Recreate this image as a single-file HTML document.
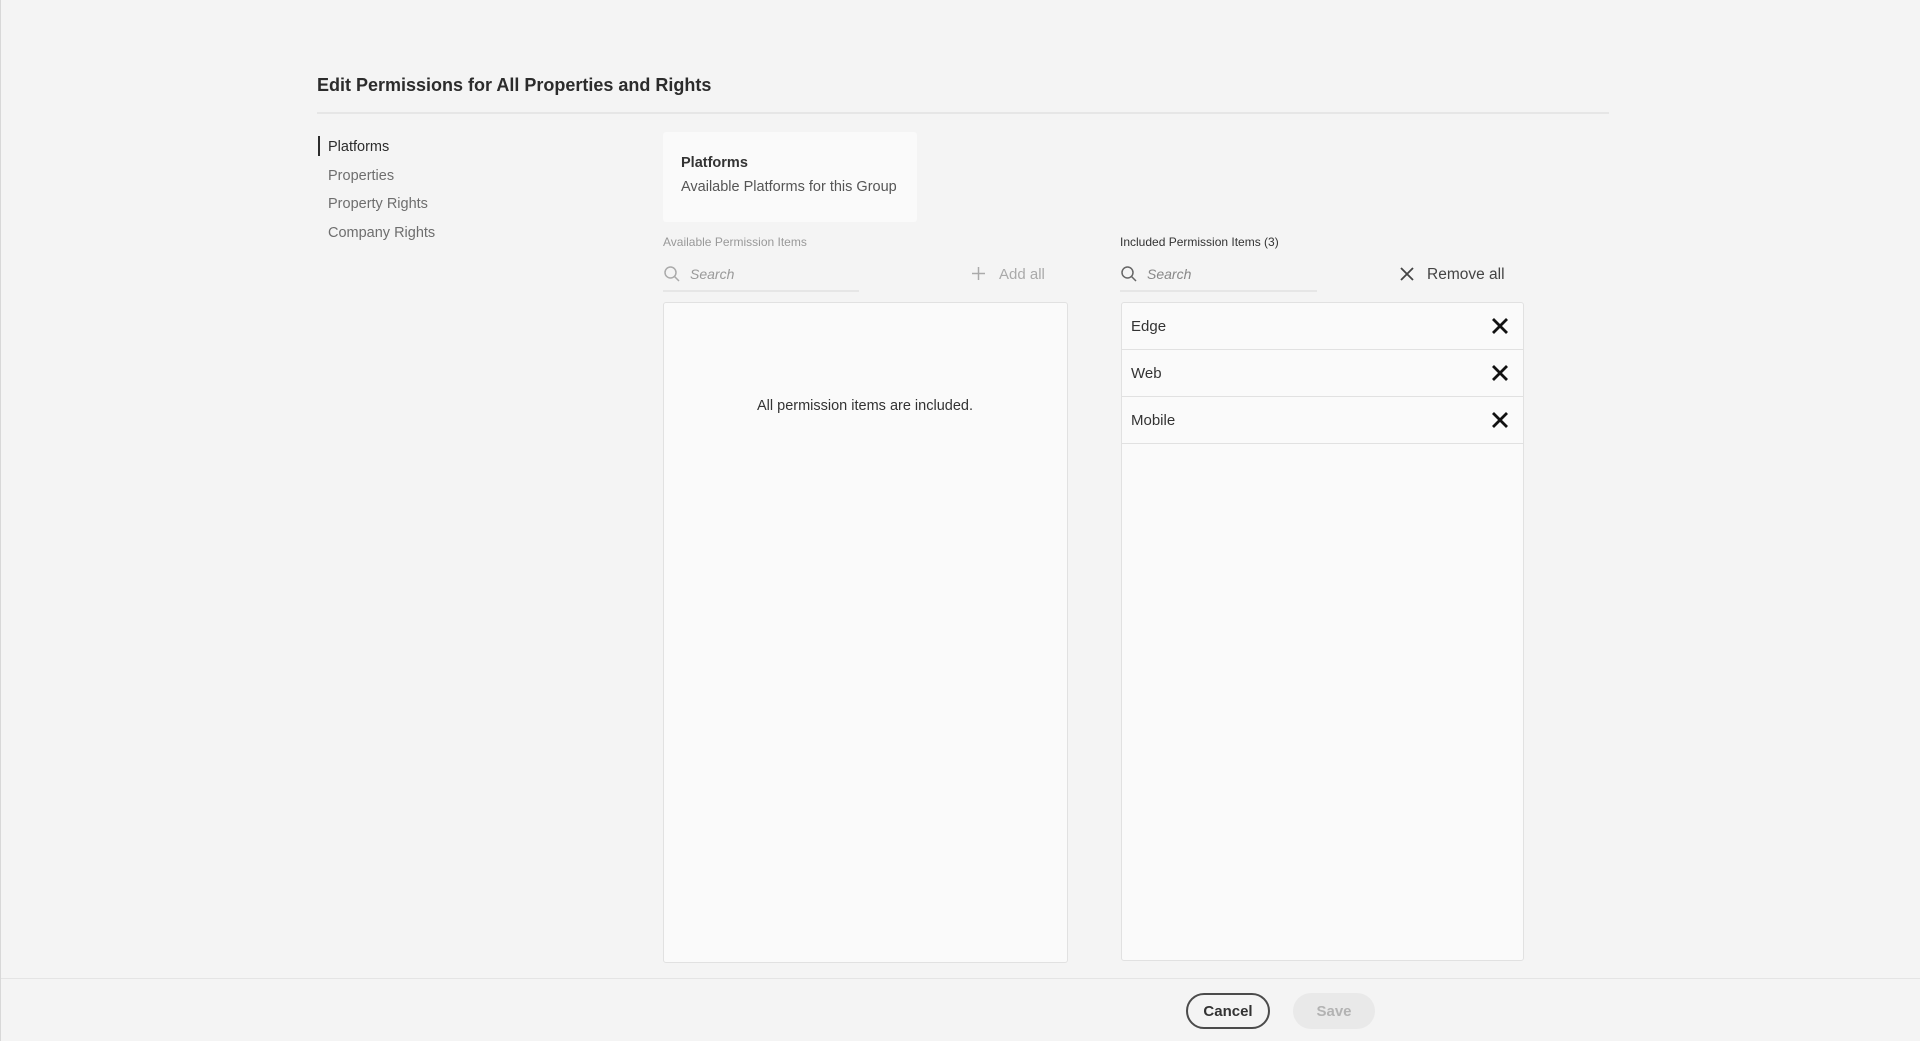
<!DOCTYPE html>
<html><head><meta charset="utf-8"><style>
*{box-sizing:border-box;margin:0;padding:0}
body{width:1920px;height:1041px;background:#f4f4f4;font-family:"Liberation Sans",sans-serif;color:#2c2c2c;position:relative;overflow:hidden;border-left:1px solid #d8d8d8}
.a{position:absolute;white-space:nowrap}
.box{position:absolute;background:#fafafa;border:1px solid #e1e1e1;border-radius:3px}
.row{position:absolute;left:0;right:0;height:47px;border-bottom:1px solid #e1e1e1;font-size:15px;padding-left:9px;line-height:48px;color:#333}
.row svg{position:absolute;right:14px;top:14px}
</style></head><body>
<div class="a" style="left:316px;top:75px;font-size:18px;font-weight:bold;color:#2c2c2c">Edit Permissions for All Properties and Rights</div>
<div class="a" style="left:316px;top:112px;width:1292px;height:2px;background:#e6e6e6"></div>
<div class="a" style="left:317px;top:136px;width:2px;height:20px;background:#2c2c2c"></div>
<div class="a" style="left:327px;top:139px;font-size:14.5px;color:#2c2c2c">Platforms</div>
<div class="a" style="left:327px;top:168px;font-size:14.5px;color:#6e6e6e">Properties</div>
<div class="a" style="left:327px;top:196px;font-size:14.5px;color:#6e6e6e">Property Rights</div>
<div class="a" style="left:327px;top:225px;font-size:14.5px;color:#6e6e6e">Company Rights</div>
<div class="a" style="left:662px;top:132px;width:254px;height:90px;background:#fafafa;border-radius:3px"></div>
<div class="a" style="left:680px;top:155px;font-size:14.5px;font-weight:bold;color:#333">Platforms</div>
<div class="a" style="left:680px;top:179px;font-size:14.5px;color:#555">Available Platforms for this Group</div>
<div class="a" style="left:662px;top:235px;font-size:12px;color:#999">Available Permission Items</div>
<svg class="a" style="left:662px;top:265px" width="18" height="18" viewBox="0 0 18 18"><circle cx="7.5" cy="7.5" r="5.5" fill="none" stroke="#aaa" stroke-width="1.5"/><path d="M11.5 11.5L16 16" stroke="#aaa" stroke-width="1.5"/></svg>
<div class="a" style="left:689px;top:266px;font-size:14px;font-style:italic;color:#999">Search</div>
<div class="a" style="left:662px;top:290px;width:196px;height:2px;background:#e6e6e6"></div>
<svg class="a" style="left:970px;top:266px" width="15" height="15" viewBox="0 0 15 15"><path d="M7.5 1v13M1 7.5h13" stroke="#aaa" stroke-width="1.5"/></svg>
<div class="a" style="left:998px;top:266px;font-size:15px;color:#aaa">Add all</div>
<div class="box" style="left:662px;top:302px;width:405px;height:661px"></div>
<div class="a" style="left:664px;width:400px;top:398px;text-align:center;font-size:14.5px;color:#333">All permission items are included.</div>
<div class="a" style="left:1119px;top:235px;font-size:12px;color:#333">Included Permission Items (3)</div>
<svg class="a" style="left:1119px;top:265px" width="18" height="18" viewBox="0 0 18 18"><circle cx="7.5" cy="7.5" r="5.5" fill="none" stroke="#666" stroke-width="1.5"/><path d="M11.5 11.5L16 16" stroke="#666" stroke-width="1.5"/></svg>
<div class="a" style="left:1146px;top:266px;font-size:14px;font-style:italic;color:#888">Search</div>
<div class="a" style="left:1119px;top:290px;width:197px;height:2px;background:#e6e6e6"></div>
<svg class="a" style="left:1399px;top:267px" width="14" height="14" viewBox="0 0 14 14"><path d="M1 1l12 12M13 1L1 13" stroke="#444" stroke-width="1.8"/></svg>
<div class="a" style="left:1426px;top:266px;font-size:15.5px;color:#444">Remove all</div>
<div class="box" style="left:1120px;top:302px;width:403px;height:659px">
<div class="row" style="top:0">Edge<svg width="18" height="18" viewBox="0 0 18 18"><path d="M2 2l14 14M16 2L2 16" stroke="#111" stroke-width="2.8"/></svg></div>
<div class="row" style="top:47px">Web<svg width="18" height="18" viewBox="0 0 18 18"><path d="M2 2l14 14M16 2L2 16" stroke="#111" stroke-width="2.8"/></svg></div>
<div class="row" style="top:94px">Mobile<svg width="18" height="18" viewBox="0 0 18 18"><path d="M2 2l14 14M16 2L2 16" stroke="#111" stroke-width="2.8"/></svg></div>
</div>
<div class="a" style="left:0;top:978px;width:1920px;height:1px;background:#e4e4e4"></div>
<div class="a" style="left:1185px;top:993px;width:84px;height:36px;border:2px solid #4b4b4b;border-radius:18px;text-align:center;line-height:33px;font-size:15px;font-weight:bold;color:#333">Cancel</div>
<div class="a" style="left:1292px;top:993px;width:82px;height:36px;background:#e9e9e9;border-radius:18px;text-align:center;line-height:37px;font-size:15px;font-weight:bold;color:#b3b3b3">Save</div>
</body></html>
